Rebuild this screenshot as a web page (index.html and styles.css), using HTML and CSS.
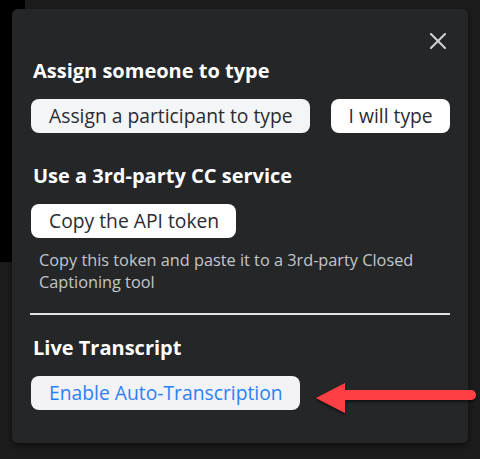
FILE: index.html
```html
<!DOCTYPE html>
<html>
<head>
<meta charset="utf-8">
<link rel="stylesheet" href="styles.css">
</head>
<body>
<div class="stage">
  <div class="backdrop-left"></div>
  <div class="panel">
    <button class="close" aria-label="Close">
      <svg width="16" height="16" viewBox="0 0 16 16"><path d="M1 1 L15 15 M15 1 L1 15" stroke="#d2d2d4" stroke-width="2" stroke-linecap="square" fill="none"/></svg>
    </button>
    <section class="group">
      <h2 class="heading">Assign someone to type</h2>
      <div class="row">
        <button class="btn btn-grey">Assign a participant to type</button>
        <button class="btn btn-white">I will type</button>
      </div>
    </section>
    <section class="group">
      <h2 class="heading">Use a 3rd-party CC service</h2>
      <div class="row">
        <button class="btn btn-white">Copy the API token</button>
      </div>
      <p class="desc">Copy this token and paste it to a 3rd-party Closed Captioning tool</p>
    </section>
    <hr class="divider">
    <section class="group">
      <h2 class="heading">Live Transcript</h2>
      <div class="row">
        <button class="btn btn-light btn-blue">Enable Auto-Transcription</button>
      </div>
    </section>
  </div>
  <svg class="arrow" width="170" height="44" viewBox="0 0 170 44">
    <defs>
      <filter id="sh" x="-10%" y="-30%" width="120%" height="160%">
        <feDropShadow dx="0" dy="2" stdDeviation="1.5" flood-color="#000" flood-opacity="0.55"/>
      </filter>
    </defs>
    <g filter="url(#sh)" fill="#fe4045">
      <path d="M160 10 L34 10 L34 3 L5 18 L34 33 L34 20 L160 20 A5 5 0 0 0 160 10 Z"/>
    </g>
  </svg>
</div>
</body>
</html>
```

FILE: styles.css
```css
* { box-sizing: border-box; }
html, body {
  margin: 0;
  padding: 0;
  width: 480px;
  height: 459px;
  overflow: hidden;
  background: #1c1c1c;
  font-family: "Open Sans", "Noto Sans", sans-serif;
}
.stage {
  position: relative;
  width: 480px;
  height: 459px;
  background: #1c1c1c;
  padding: 9px 12px 0 12px;
}
.backdrop-left {
  position: absolute;
  left: 0;
  top: 0;
  width: 25px;
  height: 262px;
  background: #000;
}
.panel {
  position: relative;
  width: 456px;
  height: 434px;
  background: #252628;
  border-radius: 6px;
  box-shadow: 0 3px 6px rgba(0,0,0,0.45);
  padding: 50px 18px 0 19px;
  display: flex;
  flex-direction: column;
}
.close {
  position: absolute;
  top: 24px;
  right: 22px;
  width: 16px;
  height: 16px;
  padding: 0;
  border: 0;
  background: transparent;
  display: flex;
}
.group { display: flex; flex-direction: column; }
.heading {
  margin: 0;
  color: #ffffff;
  font-size: 20px;
  font-weight: 700;
  line-height: 24px;
  padding-left: 2px;
}
.row {
  display: flex;
  gap: 21px;
  margin-top: 16px;
}
.btn {
  font-family: inherit;
  font-size: 19.3px;
  line-height: 24px;
  height: 34px;
  padding: 5px 17px 5px 18px;
  border: 0;
  border-radius: 8px;
  color: #2b2b33;
  white-space: nowrap;
}
.btn-grey { background: #f4f5f7; }
.btn-white { background: #ffffff; }
.btn-light { background: #f2f2f7; }
.btn-blue { color: #2a82f2; }
.group + .group { margin-top: 31px; }
.desc {
  margin: 11px 0 0 8px;
  color: #c3c6ca;
  font-size: 16.3px;
  line-height: 22px;
  width: 405px;
}
.divider {
  margin: 20px 0 0 -1px;
  width: 420px;
  height: 2px;
  border: 0;
  background: #e2e2e4;
}
.divider + .group { margin-top: 21px; }
.arrow {
  position: absolute;
  left: 311px;
  top: 380px;
}
```
